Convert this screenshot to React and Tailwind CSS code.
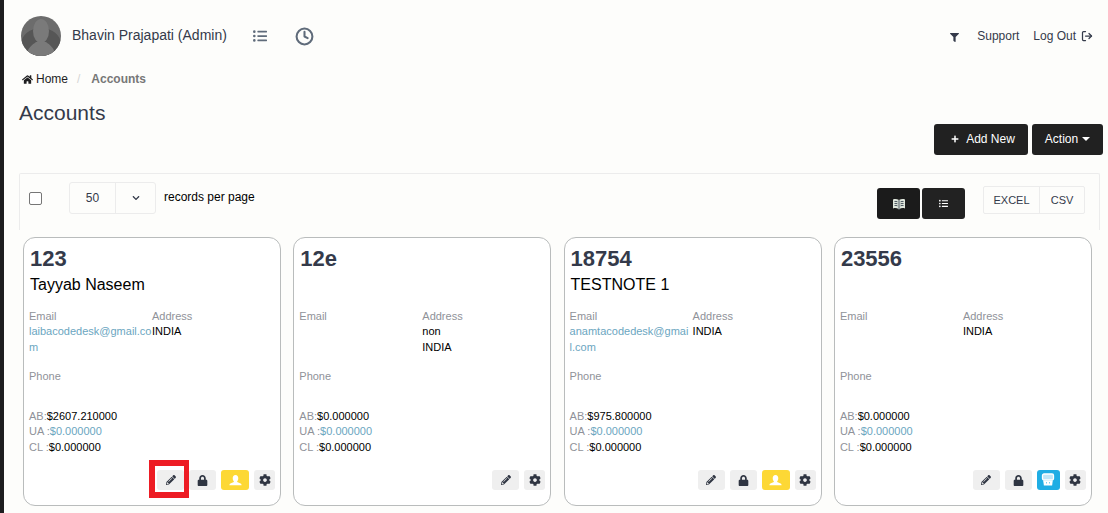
import { FaHome, FaFilter, FaPencilAlt, FaLock, FaCog, FaListUl, FaPlus, FaChevronDown } from "react-icons/fa";
import { Clock, LogOut } from "lucide-react";

const ACCOUNTS = [
  { id: "123", name: "Tayyab Naseem", email: ["laibacodedesk@gmail.co", "m"], address: ["INDIA"], ab: "$2607.210000", badge: "user" },
  { id: "12e", name: "", email: [], address: ["non", "INDIA"], ab: "$0.000000", short: true },
  { id: "18754", name: "TESTNOTE 1", email: ["anamtacodedesk@gmai", "l.com"], address: ["INDIA"], ab: "$975.800000", badge: "user" },
  { id: "23556", name: "", email: [], address: ["INDIA"], ab: "$0.000000", badge: "print" },
];

function BookIcon() {
  return (
    <svg viewBox="0 0 14 12" className="w-[14px] h-3" fill="none">
      <path d="M1 1.500c2-.8 4-.6 6 .6 2-1.200 4-1.400 6-.6v9c-2-.8-4-.6-6 .9-2-1.500-4-1.700-6-.9z" fill="#dfe6dc" />
      <path d="M7 2v9.400M2.500 3.500c1-.2 2-.1 3 .3M2.500 5.500c1-.2 2-.1 3 .3M2.500 7.500c1-.2 2-.1 3 .3M8.500 3.800c1-.4 2-.5 3-.3M8.500 5.800c1-.4 2-.5 3-.3M8.500 7.800c1-.4 2-.5 3-.3" stroke="#3a4652" strokeWidth=".9" />
    </svg>
  );
}

function BusIcon() {
  return (
    <svg viewBox="0 0 14 14" className="w-[14px] h-[14px]" fill="none">
      <rect x="1.500" y="1" width="11" height="6" rx="1.500" fill="#bfe6f7" stroke="#fff" strokeWidth="1.300" />
      <path d="M2.200 7.500h9.600l-.7 5H2.900z" fill="#fff" />
      <path d="M5.500 9v1.500M8.500 9v1.500" stroke="#1fade4" strokeWidth=".6" />
    </svg>
  );
}

function UserIcon() {
  return (
    <svg viewBox="0 0 14 14" className="w-[13px] h-[13px]" fill="currentColor">
      <path d="M7 1c2 0 3 1.500 3 3.500 0 1.300-.5 2.500-1.200 3.200v1l3.700 1.600c.7.3 1 .9 1 1.700H.5c0-.8.3-1.400 1-1.700l3.700-1.600v-1C4.500 7 4 5.800 4 4.500 4 2.500 5 1 7 1z" />
    </svg>
  );
}

function ActionButton({ className = "bg-[#efefef] text-[#2f3542] w-[27px]", children }) {
  return <span className={`flex items-center justify-center h-5 rounded-[3px] ${className}`}>{children}</span>;
}

function AccountCard({ account, highlight }) {
  return (
    <div className="relative flex flex-col h-[269px] w-[258px] shrink-0 bg-white border border-[#b9bcbc] rounded-[12px] pl-[6px] pr-[5px] pt-[6px]">
      <div className="text-[22px] leading-[30px] font-bold text-[#343a4a]">{account.id}</div>
      <div className="text-[16px] leading-[22px] h-[22px] text-black">{account.name}</div>
      <div className="flex -ml-[1px] mt-[12px] text-[11px] leading-[16px] h-[48px]">
        <div className="w-[123px]">
          <div className="text-[#8f9299] h-[15px]">Email</div>
          {account.email.map((line) => (
            <div key={line} className="text-[#6ba6bf]">{line}</div>
          ))}
        </div>
        <div>
          <div className="text-[#8f9299] h-[15px]">Address</div>
          {account.address.map((line) => (
            <div key={line} className="text-black">{line}</div>
          ))}
        </div>
      </div>
      <div className="-ml-[1px] mt-[12px] text-[11px] leading-[16px] text-[#8f9299]">Phone</div>
      <div className="-ml-[1px] mt-[24px] text-[11px] leading-[16px] text-[#8f9299]">
        <div className="h-[15px]">AB:<span className="text-black">{account.ab}</span></div>
        <div>UA :<span className="text-[#6ba6bf]">$0.000000</span></div>
        <div>CL :<span className="text-black">$0.000000</span></div>
      </div>
      <div className="flex justify-end items-center gap-[5px] mt-[15px]">
        <ActionButton><FaPencilAlt size={10} /></ActionButton>
        {!account.short && <ActionButton><FaLock size={11} /></ActionButton>}
        {account.badge === "user" && <ActionButton className="bg-[#fdd835] text-white w-[28px]"><UserIcon /></ActionButton>}
        {account.badge === "print" && <ActionButton className="bg-[#1fade4] text-white w-[23px]"><BusIcon /></ActionButton>}
        <ActionButton className="bg-[#efefef] text-[#2f3542] w-[21px]"><FaCog size={12} /></ActionButton>
      </div>
      {highlight && <span className="absolute left-[125px] top-[222px] w-10 h-[38px] border-[6px] border-r-[5px] border-[#ed1c24]" />}
    </div>
  );
}

export default function App() {
  return (
    <div className="h-[513px] overflow-hidden bg-[#fdfdfb] border-l-[4px] border-[#1d1d1f] font-['Liberation_Sans',Arial,sans-serif]">
      {/* Top bar */}
      <div className="flex items-center h-10 mt-4 pl-[17px] pr-[15px]">
        <svg viewBox="0 0 40 40" className="w-10 h-10 rounded-full">
          <rect width="40" height="40" fill="#6c6c6c" />
          <ellipse cx="20" cy="28" rx="20" ry="16" fill="#565656" />
          <ellipse cx="20" cy="15" rx="8" ry="12" fill="#7a7a7a" />
          <path d="M6 40c0-8 5-11 9-14h10c4 3 9 6 9 14z" fill="#7a7a7a" />
        </svg>
        <span className="ml-[11px] text-[14px] text-[#343a4a] -mt-[2px]">Bhavin Prajapati (Admin)</span>
        <FaListUl size={14} className="ml-[26px] text-[#5f6b7a]" />
        <Clock size={19} strokeWidth={2.6} className="ml-[28px] text-[#5f6b7a]" />
        <FaFilter size={9} className="ml-auto mt-[2px] text-[#343a4a]" />
        <span className="ml-[18px] text-[12px] text-[#343a4a]">Support</span>
        <span className="ml-[14px] text-[12px] text-[#343a4a]">Log Out</span>
        <LogOut size={12} strokeWidth={2.5} className="ml-[5px] text-[#343a4a]" />
      </div>

      {/* Breadcrumb */}
      <div className="flex items-center h-4 mt-[15px] pl-[18px] text-[12px]">
        <FaHome size={11} className="text-[#1d1d1f]" />
        <span className="ml-[3px] text-[#1d1d1f]">Home</span>
        <span className="ml-[9px] text-[#d5d5d5]">/</span>
        <span className="ml-[11px] font-bold text-[#777777]">Accounts</span>
      </div>

      {/* Title and actions */}
      <div className="flex justify-between pl-[15px] pr-[5px] mt-[14px] h-[72px]">
        <h1 className="text-[21px] leading-[24px] text-[#343a4a]">Accounts</h1>
        <div className="flex gap-1 mt-[23px] h-[31px] text-[12px] text-white">
          <span className="flex items-center justify-center w-[94px] pl-1 pb-[2px] rounded-[3px] bg-[#212121]"><FaPlus size={8} className="mr-[7px]" />Add New</span>
          <span className="flex items-center justify-center w-[71px] pb-[2px] rounded-[3px] bg-[#212121]">
            Action
            <span className="ml-1 border-x-[4px] border-t-[4px] border-x-transparent border-t-white" />
          </span>
        </div>
      </div>

      {/* Toolbar */}
      <div className="flex items-start h-[57px] ml-[15px] mr-[8px] border border-b-0 border-[#ececec] rounded-t-[2px]">
        <span className="mt-[18px] ml-[9px] w-[13px] h-[13px] rounded-[2px] border border-[#767676] bg-white" />
        <div className="flex mt-2 ml-[27px] h-8 w-[87px] rounded-[3px] border border-[#ececec] text-[12px] text-[#343a4a]">
          <span className="flex items-center justify-center w-[46px] border-r border-[#ececec]">50</span>
          <span className="flex items-center justify-center flex-1"><FaChevronDown size={8} /></span>
        </div>
        <span className="mt-[15px] ml-[8px] text-[12px] leading-[16px] text-black">records per page</span>
        <div className="flex gap-[2px] ml-auto mt-[14px]">
          <span className="flex items-center justify-center w-[43px] h-[31px] rounded-[3px] bg-[#1b1b1b]"><BookIcon /></span>
          <span className="flex items-center justify-center w-[43px] h-[31px] rounded-[3px] bg-[#222222] text-white"><FaListUl size={9} /></span>
        </div>
        <div className="flex ml-[18px] mr-[14px] mt-[12px] h-7 rounded-[2px] border border-[#ececec] text-[11px] text-[#343a4a]">
          <span className="flex items-center justify-center w-[56px] border-r border-[#ececec]">EXCEL</span>
          <span className="flex items-center justify-center w-[44px]">CSV</span>
        </div>
      </div>

      {/* Cards */}
      <div className="flex gap-[12.3px] pl-[19px] mt-[7px]">
        {ACCOUNTS.map((account, i) => (
          <AccountCard key={account.id} account={account} highlight={i === 0} />
        ))}
      </div>
    </div>
  );
}
